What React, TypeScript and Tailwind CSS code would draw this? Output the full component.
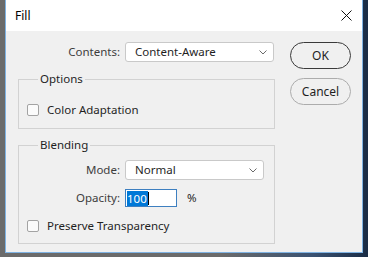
import React from "react";

const font = { fontFamily: '"Noto Sans", "Open Sans", Arial, sans-serif' };

function Chevron() {
  return (
    <svg width="8" height="5" viewBox="0 0 8 5" className="block">
      <path d="M0.5 0.5 L4 4 L7.5 0.5" fill="none" stroke="#6a6a6a" strokeWidth="1" />
    </svg>
  );
}

function Select({ value, width }: { value: string; width: string }) {
  return (
    <div
      className={`${width} h-[20px] bg-white border border-[#c9c9c9] rounded-[3px] flex items-center justify-between pl-[9px] pr-[6px] text-[#1f1f1f]`}
    >
      <span>{value}</span>
      <Chevron />
    </div>
  );
}

function Checkbox() {
  return (
    <div className="w-[12px] h-[12px] rounded-[2px] border border-[#a3a3a3] bg-[#fbfbfb] shrink-0" />
  );
}

export default function App() {
  return (
    <div
      className="w-[368px] h-[257px] overflow-hidden flex bg-[linear-gradient(90deg,#6b6b6b_0%,#6b6b6b_60%,#3a5272_85%,#1a2c45_100%)] text-[11.5px] leading-[16px]"
      style={font}
    >
      <div className="w-[5px] shrink-0" />
      <div className="w-[358px] h-[253px] shrink-0 flex flex-col border-l border-r border-b border-[#7fb3e3] bg-[#f0f0f0]">
        <div className="h-[31px] bg-white flex items-center justify-between pl-[9px] pr-[10px] shrink-0">
          <span className="text-[12px] text-black">Fill</span>
          <svg width="11" height="11" viewBox="0 0 11 11" className="block">
            <path d="M0.5 0.5 L10.5 10.5 M10.5 0.5 L0.5 10.5" stroke="#111" strokeWidth="1" />
          </svg>
        </div>
        <div className="flex pl-[12px] pt-[11px] gap-[15px]">
          <div className="w-[257px] flex flex-col">
            <div className="flex items-center h-[20px]">
              <span className="w-[102px] text-right text-[#3d3d3d]">Contents:</span>
              <div className="ml-[5px]">
                <Select value="Content-Aware" width="w-[149px]" />
              </div>
            </div>
            <fieldset className="mt-[9px] border border-[#d2d2d2] px-[8px] pt-[15px] pb-[10px]">
              <legend className="ml-[11px] px-[2px] text-[#1f1f1f]">Options</legend>
              <div className="flex items-center h-[16px] gap-[8px] text-[#1f1f1f]">
                <Checkbox />
                <span>Color Adaptation</span>
              </div>
            </fieldset>
            <fieldset className="mt-[8px] border border-[#d2d2d2] px-[8px] pt-[7px] pb-[9px]">
              <legend className="ml-[11px] px-[2px] text-[#1f1f1f]">Blending</legend>
              <div className="flex items-center h-[20px]">
                <span className="w-[93px] text-right text-[#3d3d3d]">Mode:</span>
                <div className="ml-[5px]">
                  <Select value="Normal" width="w-[139px]" />
                </div>
              </div>
              <div className="flex items-center h-[18px] mt-[9px]">
                <span className="w-[93px] text-right text-[#3d3d3d]">Opacity:</span>
                <div className="ml-[5px] w-[52px] h-[18px] bg-white border border-[#3d7fc0] flex items-center pl-[1px]">
                  <span className="bg-[#0078d7] text-white h-[15px] leading-[15px] pr-[1px]">100</span>
                  <span className="w-[1px] h-[13px] bg-black" />
                </div>
                <span className="ml-[10px] text-[#1f1f1f]">%</span>
              </div>
              <div className="flex items-center h-[16px] mt-[11px] gap-[8px] text-[#1f1f1f]">
                <Checkbox />
                <span>Preserve Transparency</span>
              </div>
            </fieldset>
          </div>
          <div className="w-[61px] flex flex-col gap-[9px]">
            <div className="h-[27px] rounded-full border border-[#3a3a3a] bg-[#f0f0f0] flex items-center justify-center text-[12px] text-[#1f1f1f]">
              OK
            </div>
            <div className="h-[27px] rounded-full border border-[#acacac] bg-[#f0f0f0] flex items-center justify-center text-[12px] text-[#1f1f1f]">
              Cancel
            </div>
          </div>
        </div>
      </div>
      <div className="flex-1" />
    </div>
  );
}
